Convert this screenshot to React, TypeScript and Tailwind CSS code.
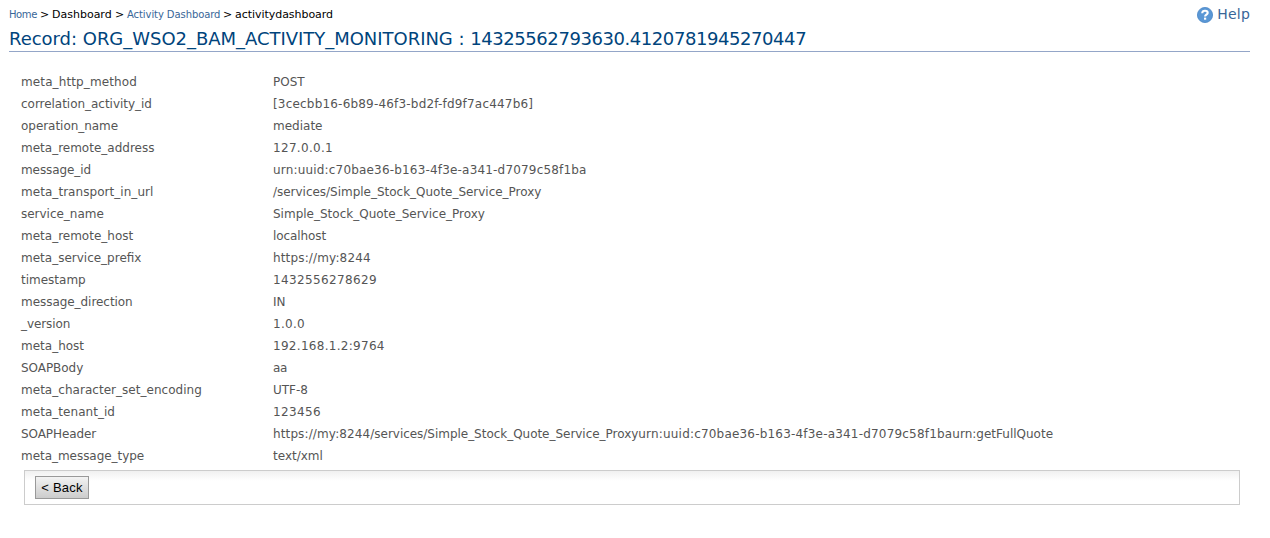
type Segment = { text: string; tracking?: string };
type Row = { name: string; nameTracking?: string; value: Segment[] };

const rows: Row[] = [
  { name: "meta_http_method", nameTracking: "tracking-[0.12px]", value: [{ text: "POST" }] },
  { name: "correlation_activity_id", nameTracking: "tracking-[-0.03px]", value: [{ text: "[3cecbb16-6b89-46f3-bd2f-fd9f7ac447b6]", tracking: "tracking-[0.19px]" }] },
  { name: "operation_name", nameTracking: "tracking-[-0.04px]", value: [{ text: "mediate" }] },
  { name: "meta_remote_address", value: [{ text: "127.0.0.1", tracking: "tracking-[0.31px]" }] },
  { name: "message_id", nameTracking: "tracking-[-0.09px]", value: [{ text: "urn:uuid:c70bae36-b163-4f3e-a341-d7079c58f1ba", tracking: "tracking-[0.18px]" }] },
  { name: "meta_transport_in_url", nameTracking: "tracking-[0.05px]", value: [{ text: "/services/Simple_Stock_Quote_Service_Proxy", tracking: "tracking-[-0.02px]" }] },
  { name: "service_name", nameTracking: "tracking-[-0.02px]", value: [{ text: "Simple_Stock_Quote_Service_Proxy" }] },
  { name: "meta_remote_host", value: [{ text: "localhost", tracking: "tracking-[-0.08px]" }] },
  { name: "meta_service_prefix", value: [{ text: "https://my:8244", tracking: "tracking-[0.15px]" }] },
  { name: "timestamp", value: [{ text: "1432556278629", tracking: "tracking-[0.365px]" }] },
  { name: "message_direction", nameTracking: "tracking-[-0.05px]", value: [{ text: "IN" }] },
  { name: "_version", nameTracking: "tracking-[-0.1px]", value: [{ text: "1.0.0", tracking: "tracking-[0.29px]" }] },
  { name: "meta_host", value: [{ text: "192.168.1.2:9764", tracking: "tracking-[0.29px]" }] },
  { name: "SOAPBody", nameTracking: "tracking-[-0.05px]", value: [{ text: "aa", tracking: "tracking-[-0.3px]" }] },
  { name: "meta_character_set_encoding", nameTracking: "tracking-[0.03px]", value: [{ text: "UTF-8" }] },
  { name: "meta_tenant_id", nameTracking: "tracking-[0.04px]", value: [{ text: "123456", tracking: "tracking-[0.365px]" }] },
  {
    name: "SOAPHeader",
    nameTracking: "tracking-[-0.08px]",
    value: [
      { text: "https://my:8244", tracking: "tracking-[0.12px]" },
      { text: "/services/Simple_Stock_Quote_Service_Proxy", tracking: "tracking-[-0.03px]" },
      { text: "urn:uuid:c70bae36-b163-4f3e-a341-d7079c58f1ba", tracking: "tracking-[0.19px]" },
      { text: "urn:getFullQuote" },
    ],
  },
  { name: "meta_message_type", nameTracking: "tracking-[-0.04px]", value: [{ text: "text/xml" }] },
];

function HelpIcon() {
  return (
    <svg width="16" height="16" viewBox="0 0 16 16" aria-hidden="true">
      <circle cx="8" cy="8" r="7.6" fill="#5a97d5" stroke="#4a86c6" strokeWidth="0.8" />
      <path d="M5.2 6.2C5.3 4.6 6.4 3.8 8 3.8c1.6 0 2.7.8 2.7 2.1 0 1.7-2.6 1.8-2.6 3.6" fill="none" stroke="#fff" strokeWidth="2.1" />
      <rect x="7" y="10.6" width="2.2" height="2.1" fill="#fff" />
    </svg>
  );
}

export default function App() {
  return (
    <div className="h-[538px] bg-white pl-[9px] pr-5 pt-[7px] font-['DejaVu_Sans',sans-serif] text-black">
      <header className="flex h-[19px] items-start justify-between">
        <nav className="flex gap-[3px] whitespace-nowrap pt-px text-[11px] leading-[14px]">
          <a className="w-7 text-[10px] tracking-[-0.4px] text-[#386698]">Home</a>
          <span className="w-[9px]">&gt;</span>
          <span className="w-[60px]">Dashboard</span>
          <span className="w-[9px]">&gt;</span>
          <a className="w-[93px] text-[10px] tracking-[-0.08px] text-[#386698]">Activity Dashboard</a>
          <span className="w-[9px]">&gt;</span>
          <span className="tracking-[-0.04px]">activitydashboard</span>
        </nav>
        <a className="flex gap-1 text-[14px] leading-[14px] tracking-[0.2px] text-[#386698]">
          <HelpIcon />
          Help
        </a>
      </header>
      <h1 className="h-[26px] whitespace-pre border-b border-[#94a6c8] text-[18px] leading-[25px] text-[#00447c]">
        <span className="tracking-[-0.03px]">Record: ORG_WSO2_BAM_ACTIVITY_MONITORING : </span>
        <span className="tracking-[-0.43px]">14325562793630.4120781945270447</span>
      </h1>
      <dl className="mt-[19px] px-3 text-[12px] leading-[22px] text-[#555555]">
        {rows.map(({ name, nameTracking, value }) => (
          <div key={name} className="flex">
            <dt className={`w-[252px] shrink-0 ${nameTracking ?? ""}`}>{name}</dt>
            <dd className="whitespace-nowrap">
              {value.map(({ text, tracking }) => (
                <span key={text} className={tracking}>{text}</span>
              ))}
            </dd>
          </div>
        ))}
      </dl>
      <div className="ml-[15px] mr-[10px] mt-[3px] flex h-[35px] items-start border border-[#cccccc] bg-linear-to-b from-[#f0f0f0] to-white to-30% pl-[10px] pt-[5px]">
        <button className="h-[23px] w-[54px] whitespace-nowrap border border-[#999999] bg-linear-to-b from-[#f3f3f3] to-[#cccccc] font-['Liberation_Sans',Arial,sans-serif] text-[13px] leading-[21px] tracking-[0.2px]">
          &lt; Back
        </button>
      </div>
    </div>
  );
}
